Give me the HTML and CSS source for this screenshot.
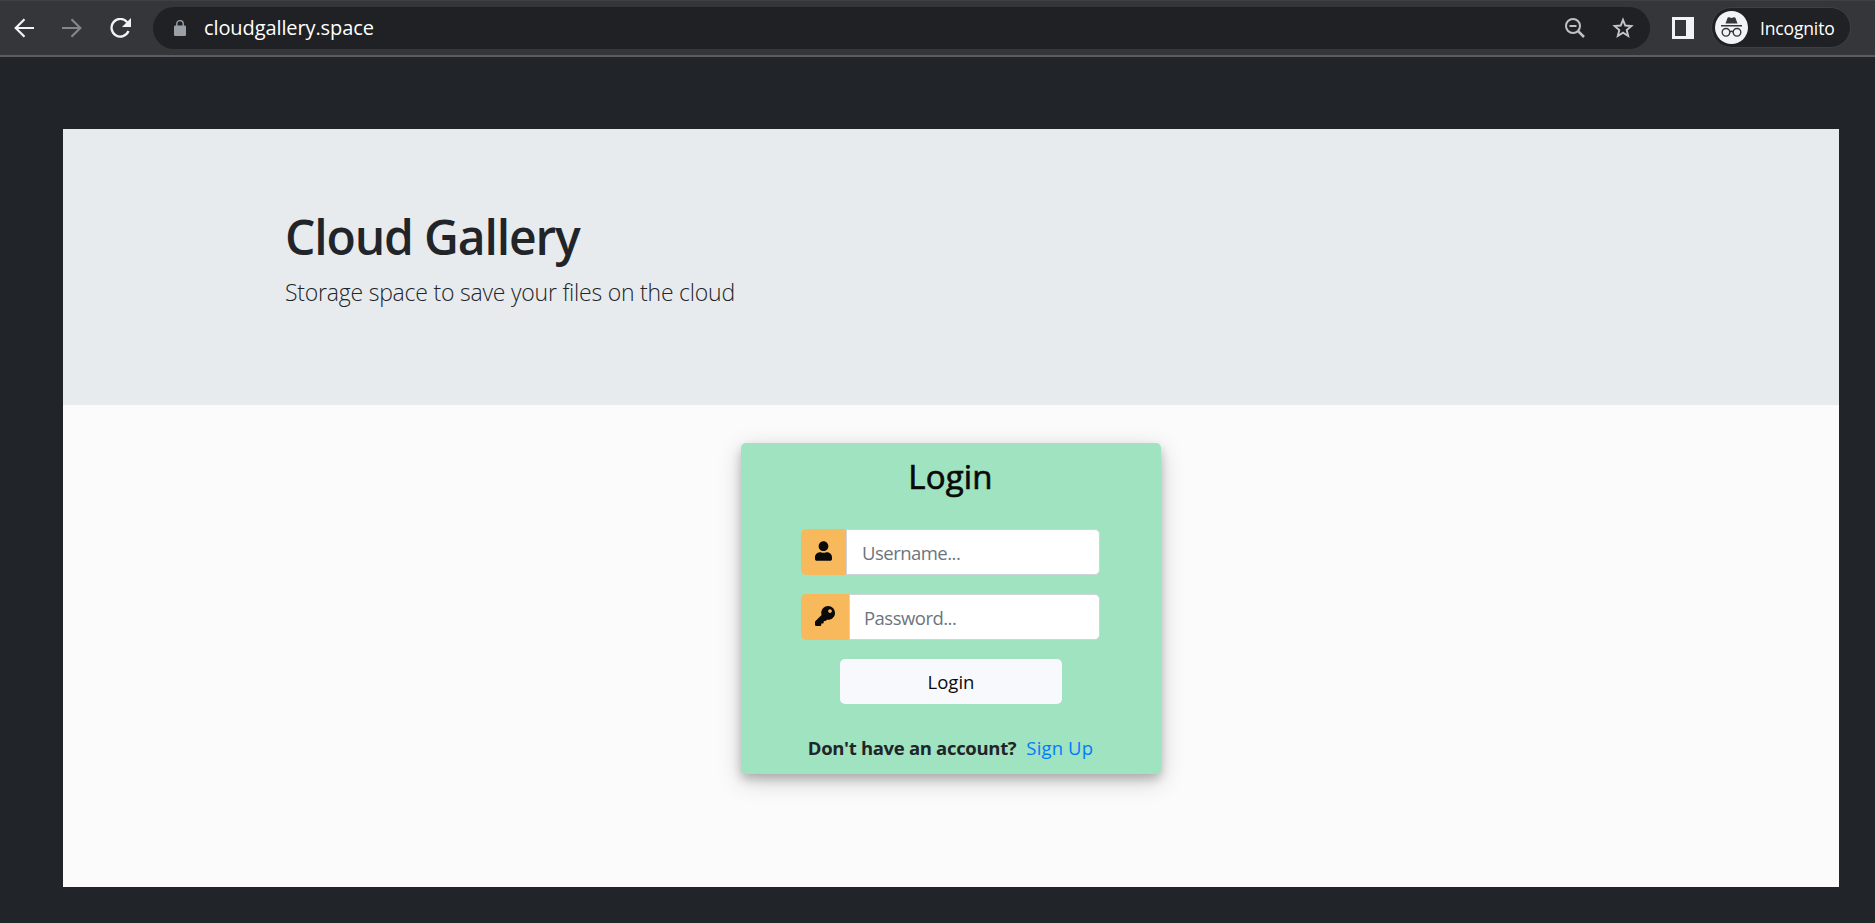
FILE: index.html
```
<!DOCTYPE html>
<html lang="en">
<head>
<meta charset="utf-8">
<title>Cloud Gallery</title>
<link rel="stylesheet" href="styles.css">
</head>
<body>
<header class="toolbar">
  <nav class="nav">
    <svg width="20" height="20" viewBox="0 0 20 20" fill="none" stroke="#f1f3f4" stroke-width="2.2"><path d="M20 10H2M10.5 1.2L1.7 10l8.8 8.8"/></svg>
    <svg width="20" height="20" viewBox="0 0 20 20" fill="none" stroke="#85868a" stroke-width="2.2"><path d="M0 10h18M9.5 1.2l8.8 8.8-8.8 8.8"/></svg>
    <svg width="22" height="20" viewBox="0 0 22 20" fill="none" stroke="#f1f3f4" stroke-width="2.3"><path d="M17.2 4.2A8.8 8.8 0 1 0 18.5 13"/><path d="M21 0v9h-9z" fill="#f1f3f4" stroke="none"/></svg>
  </nav>
  <div class="omnibox">
    <svg class="lock" width="12" height="16" viewBox="0 0 12 16"><rect y="5.5" width="12" height="10.5" rx="1.3" fill="#9aa0a6"/><path d="M2.8 6V3.8a3.2 3.2 0 0 1 6.4 0V6" fill="none" stroke="#9aa0a6" stroke-width="1.4"/></svg>
    <span class="url">cloudgallery.space</span>
    <svg class="magnifier" width="20" height="20" viewBox="0 0 20 20" fill="none" stroke="#c0c1c3" stroke-width="2"><circle cx="8" cy="8" r="7"/><path d="M4.500 8h7"/><path d="M13 13l6 6" stroke-width="2.5"/></svg>
    <svg class="star" width="22" height="22" viewBox="0 0 22 22" fill="none" stroke="#c5c6c8" stroke-width="1.9"><path d="M11 2.800l2.300 5.700 6.100.5-4.700 4 1.500 6-5.200-3.300L5.800 19l1.500-6-4.700-4 6.100-.5z"/></svg>
  </div>
  <svg class="panel" width="22" height="22" viewBox="0 0 22 22"><path fill="#f1f3f4" fill-rule="evenodd" d="M0 0h22v22H0zM3 3v16h11V3z"/></svg>
  <div class="profile">
    <svg width="33" height="33" viewBox="0 0 33 33"><circle cx="16.5" cy="16.5" r="16.5" fill="#f1f3f4"/><path d="M10.500 12.500l2-5.400c.3-.8.8-1 1.500-.8l2.500.6 2.500-.6c.7-.2 1.200 0 1.500.8l2 5.400zM6 14h21v1.400H6z" fill="#35363a"/><g fill="none" stroke="#35363a" stroke-width="1.4"><circle cx="11" cy="21.3" r="3.8"/><circle cx="22" cy="21.3" r="3.8"/><path d="M14.800 20.800q1.700-1 3.400 0"/></g></svg>
    <span class="profile-name">Incognito</span>
  </div>
</header>
<main class="page">
  <section class="hero">
    <h1 class="title">Cloud Gallery</h1>
    <p class="lead">Storage space to save your files on the cloud</p>
  </section>
  <form class="card">
    <h2 class="card-title">Login</h2>
    <div class="field">
      <span class="addon"><svg width="17" height="20" viewBox="0 0 448 512" fill="#0a0a0a"><path d="M224 256c70.700 0 128-57.300 128-128S294.700 0 224 0 96 57.300 96 128s57.300 128 128 128zm89.600 32h-16.700c-22.200 10.200-46.900 16-72.900 16s-50.600-5.800-72.900-16h-16.700C60.200 288 0 348.200 0 422.400V464c0 26.500 21.500 48 48 48h352c26.500 0 48-21.500 48-48v-41.600c0-74.200-60.200-134.400-134.400-134.400z"/></svg></span>
      <input class="input username" type="text" placeholder="Username...">
    </div>
    <div class="field">
      <span class="addon addon-key"><svg width="20" height="20" viewBox="0 0 512 512" fill="#0a0a0a"><path d="M512 176.001C512 273.203 433.202 352 336 352c-11.220 0-22.190-1.062-32.827-3.069l-24.012 27.014A23.999 23.999 0 0 1 261.223 384H224v40c0 13.255-10.745 24-24 24h-40v40c0 13.255-10.745 24-24 24H24c-13.255 0-24-10.745-24-24v-78.059c0-6.365 2.529-12.470 7.029-16.971l161.802-161.802C163.108 213.814 160 195.271 160 176 160 78.798 238.797.001 335.999 0 433.488-.001 512 78.511 512 176.001zM336 128c0 26.510 21.490 48 48 48s48-21.490 48-48-21.490-48-48-48-48 21.490-48 48z"/></svg></span>
      <input class="input password" type="password" placeholder="Password...">
    </div>
    <button class="submit" type="button">Login</button>
    <p class="signup"><strong class="question">Don't have an account?</strong><a class="link">Sign Up</a></p>
  </form>
</main>
</body>
</html>
```
FILE: styles.css
```
* { box-sizing: border-box; }
body {
  margin: 0;
  height: 923px;
  overflow: hidden;
  background: #212529;
  color: #212529;
  font-family: "Open Sans", "Noto Sans", sans-serif;
}
h1, h2, p { margin: 0; }
svg { display: block; flex: none; }
.toolbar {
  height: 57px;
  display: flex;
  align-items: center;
  padding: 0 24px 1px 14px;
  background: #35363a;
  border-top: 1px solid #3f4044;
  border-bottom: 2px solid #5b5c60;
}
.nav { display: flex; gap: 28px; width: 139px; }
.omnibox {
  width: 1497px;
  height: 42px;
  display: flex;
  align-items: center;
  padding: 0 16px 0 21px;
  border-radius: 21px;
  background: #202124;
}
.url { margin: 0 auto 0 18px; color: #fff; font-size: 20px; letter-spacing: -0.1px; }
.magnifier { margin-right: 27px; }
.panel { margin: 0 17px 0 22px; }
.profile {
  width: 140px;
  height: 41px;
  display: flex;
  align-items: center;
  gap: 12px;
  padding-left: 3px;
  border: 1px solid #3f4044;
  border-radius: 21px;
  background: #202124;
}
.profile-name { color: #fff; font-size: 17.5px; letter-spacing: -0.15px; }
.page {
  width: 1776px;
  height: 758px;
  margin: 72px 0 0 63px;
  background: #fbfbfb;
}
.hero { height: 276px; padding: 76px 222px 0; background: #e8ebee; }
.title { font-size: 48px; line-height: 64px; font-weight: 600; letter-spacing: -1.15px; white-space: nowrap; }
.lead { margin-top: 5px; font-size: 23px; line-height: 36px; font-weight: 300; letter-spacing: -0.22px; white-space: nowrap; }
.card {
  width: 420px;
  height: 331px;
  margin: 38px auto 0;
  padding: 11px 61px 0 60px;
  display: flex;
  flex-direction: column;
  border-radius: 5px;
  background: #9fe3c0;
  box-shadow: 0 5px 10px rgba(0, 0, 0, .2), 0 7px 24px rgba(0, 0, 0, .19);
}
.card-title {
  height: 75px;
  font-size: 33px;
  line-height: 46px;
  font-weight: 400;
  letter-spacing: 0.2px;
  text-align: center;
  color: #0a0a0a;
  -webkit-text-stroke: 0.7px #0a0a0a;
}
.field { height: 46px; display: flex; margin-bottom: 19px; }
.addon {
  width: 45px;
  padding: 12px 14px;
  border-radius: 5px 0 0 5px;
  background: #f7b95c;
}
.addon-key { width: 48px; }
.input {
  flex: 1;
  min-width: 0;
  padding: 0 15px;
  border: 1px solid #ced4da;
  border-radius: 0 5px 5px 0;
  background: #fff;
  font: 18.5px "Open Sans", "Noto Sans", sans-serif;
  letter-spacing: -0.52px;
}
.password { padding-left: 14px; }
.input::placeholder { color: #6c757d; opacity: 1; }
.submit {
  width: 222px;
  height: 45px;
  align-self: center;
  margin-left: 1px;
  border: 0;
  border-radius: 5px;
  background: #f8f9fc;
  color: #0a0a0a;
  font: 18.5px "Open Sans", "Noto Sans", sans-serif;
}
.signup { margin-top: 30px; display: flex; justify-content: center; gap: 10px; font-size: 18.5px; line-height: 28px; white-space: nowrap; }
.question { font-weight: 700; letter-spacing: -0.32px; }
.link { color: #007bff; letter-spacing: 0.15px; }
```
